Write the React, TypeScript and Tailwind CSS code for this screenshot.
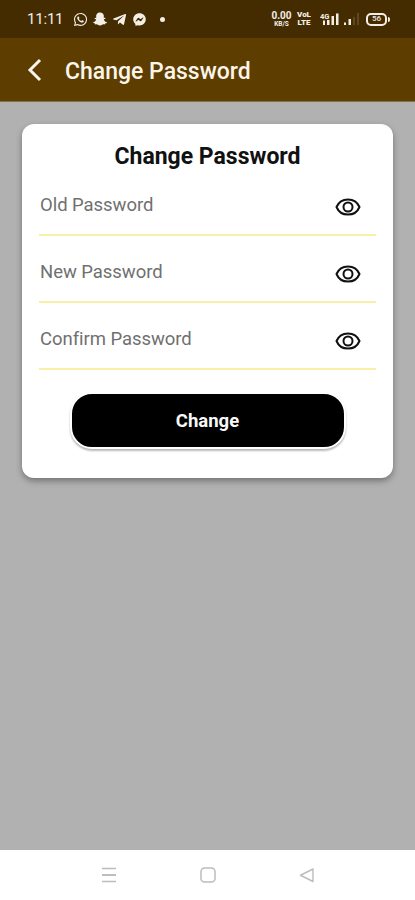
import { FaWhatsapp, FaSnapchatGhost, FaTelegramPlane, FaFacebookMessenger } from 'react-icons/fa';

function Eye() {
  return (
    <svg width="26" height="20" viewBox="0 0 26 20" fill="none" stroke="#111" strokeWidth="2">
      <path d="M1.500 10C3.500 5.200 7.900 2.400 13 2.400S22.500 5.200 24.500 10C22.500 14.800 18.100 17.600 13 17.600S3.500 14.800 1.500 10Z" strokeLinejoin="round" />
      <circle cx="13" cy="10" r="4.500" />
    </svg>
  );
}

function Field({ label }: { label: string }) {
  return (
    <div className="flex h-[67px] items-start justify-between border-b-2 border-[#f9f0a8] pl-px pr-[15px]">
      <span className="mt-[23px] text-[18.5px] leading-[26px] tracking-[-0.05px] text-[#707070]">{label}</span>
      <span className="mt-[28px]"><Eye /></span>
    </div>
  );
}

function StatusBar() {
  return (
    <div className="flex h-[38px] items-center bg-[#442c00] pl-[27px] text-[#f3eee6]">
      <span className="w-[46px] shrink-0 text-[15px] leading-none tracking-[-0.2px]">11:11</span>
      <FaWhatsapp size={15} className="shrink-0" />
      <FaSnapchatGhost size={14} className="ml-[5px] shrink-0" />
      <FaTelegramPlane size={15} className="ml-[5px] shrink-0" />
      <FaFacebookMessenger size={13} className="ml-[6px] shrink-0" />
      <span className="ml-[14px] size-[5px] shrink-0 rounded-full bg-[#f3eee6]" />
      <div className="ml-[106px] flex w-[21px] shrink-0 flex-col items-center font-bold">
        <span className="text-[10px] leading-[10px]">0.00</span>
        <span className="text-[6.500px] leading-[7px]">KB/S</span>
      </div>
      <div className="ml-[4px] flex w-[16px] shrink-0 flex-col items-center text-[8px] font-black leading-[8px]">
        <span>VoL</span>
        <span>LTE</span>
      </div>
      <svg className="ml-[8px] shrink-0" width="40" height="16" viewBox="0 0 40 16" fill="currentColor">
        <text x="0" y="8" fontSize="7.500" fontWeight="700">4G</text>
        <path d="M3 9.500h2V14H3zM7 9h2.500v5H7zM11.500 5H14v9h-2.500zM16 2.500h2.500V14H16z" />
        <path d="M24 11.500h2V14h-2zM28.500 8H31v6h-2.500z" />
        <path d="M33 6h2v8h-2zM37 2h2v12h-2z" opacity=".15" />
      </svg>
      <div className="ml-[6px] flex h-[13px] w-[21px] shrink-0 items-center justify-center rounded-[5px] border-2 border-current text-[8px] font-medium leading-none">56</div>
      <span className="ml-px h-[5px] w-[2px] shrink-0 rounded-r bg-current" />
    </div>
  );
}

export default function App() {
  return (
    <div className="flex h-[900px] w-[415px] flex-col overflow-hidden bg-[#b1b1b1] font-['Roboto',sans-serif]">
      <StatusBar />
      <header className="flex h-[64px] items-center border-b border-[#80704f] bg-[#5e3e00] pl-[27px] text-[#fbf5ea]">
        <svg width="16" height="24" viewBox="0 0 16 24" fill="none" stroke="currentColor" strokeWidth="3">
          <path d="M13 2 3 12l10 10" />
        </svg>
        <h1 className="ml-[22px] mt-[4px] text-[23px] font-medium leading-[30px]">Change Password</h1>
      </header>
      <main className="flex-1 px-[22px] pt-[22px]">
        <section className="h-[354px] rounded-[12px] bg-white px-[17px] pt-[14px] shadow-[0_3px_6px_rgba(0,0,0,0.35)]">
          <h2 className="h-[31px] text-center text-[23px] font-bold leading-[37px] text-[#111]">Change Password</h2>
          <div><Field label="Old Password" /><Field label="New Password" /><Field label="Confirm Password" /></div>
          <button className="mx-auto mt-[22px] box-content flex h-[53px] w-[272px] items-center justify-center rounded-[22px] border-2 border-white bg-black text-[18.500px] font-bold text-[#f8f8f8] shadow-[0_2px_2px_rgba(0,0,0,0.28)]"><span className="mt-[2px]">Change</span></button>
        </section>
      </main>
      <nav className="flex h-[50px] items-center bg-white pl-[101px] text-[#bcbcbc]">
        <svg width="16" height="18" viewBox="0 0 16 18" stroke="currentColor" strokeWidth="1.500"><path d="M1 2.500h14M1 15.500h14" /><path d="M1 9h14" stroke="#a8a8a8" /></svg>
        <svg className="ml-[83px]" width="16" height="18" viewBox="0 0 16 18" fill="none" stroke="currentColor" strokeWidth="1.500"><rect x="1" y="2" width="14" height="14" rx="3.500" /></svg>
        <svg className="ml-[83px]" width="16" height="18" viewBox="0 0 16 18" fill="none" stroke="currentColor" strokeWidth="1.400" strokeLinejoin="round"><path d="M14 3v12.500L1.500 9.250z" /></svg>
      </nav>
    </div>
  );
}
